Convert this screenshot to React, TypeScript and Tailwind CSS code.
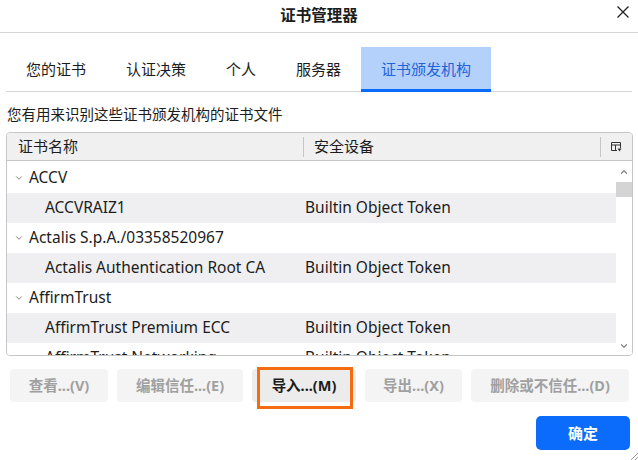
import { ChevronDown, ChevronUp } from 'lucide-react'

const rows = [
  { group: true, name: 'ACCV', device: '' },
  { group: false, name: 'ACCVRAIZ1', device: 'Builtin Object Token' },
  { group: true, name: 'Actalis S.p.A./03358520967', device: '' },
  { group: false, name: 'Actalis Authentication Root CA', device: 'Builtin Object Token' },
  { group: true, name: 'AffirmTrust', device: '' },
  { group: false, name: 'AffirmTrust Premium ECC', device: 'Builtin Object Token' },
  { group: false, name: 'AffirmTrust Networking', device: 'Builtin Object Token' },
]

const tabs = ['您的证书', '认证决策', '个人', '服务器', '证书颁发机构']

const buttons = [
  { label: '查看...(V)', w: 'w-[98px]', enabled: false },
  { label: '编辑信任...(E)', w: 'w-[126px]', enabled: false },
  { label: '导入...(M)', w: 'w-[104px]', enabled: true },
  { label: '导出...(X)', w: 'w-[97px]', enabled: false },
  { label: '删除或不信任...(D)', w: 'w-[158px]', enabled: false },
]

export default function App() {
  return (
    <div
      className="relative w-[638px] h-[460px] bg-white overflow-hidden text-[#1c1c1c]"
      style={{ fontFamily: '"Noto Sans", "Noto Sans CJK SC", sans-serif' }}
    >
      {/* Title bar */}
      <div className="relative h-[33px] border-b border-[#d6d6d6] flex items-center justify-center">
        <span className="text-[15.5px] font-bold leading-none">证书管理器</span>
        <svg className="absolute left-[617px] top-[6px]" width="12" height="12" viewBox="0 0 12 12">
          <path d="M0.5 0.5 L11.5 11.5 M11.5 0.5 L0.5 11.5" stroke="#222" strokeWidth="1.3" />
        </svg>
      </div>

      {/* Tabs */}
      <div className="px-[6px] pt-[14px]">
        <div className="flex h-[45px] border-b border-[#d6d6d6]">
          {tabs.map((t, i) => {
            const active = i === tabs.length - 1
            return (
              <div
                key={t}
                className={
                  active
                    ? 'relative px-[20px] flex items-center text-[15px] bg-[#b3d1fb] text-[#1f63d6]'
                    : 'relative px-[20px] flex items-center text-[15px]'
                }
              >
                {t}
                {active && <div className="absolute left-0 right-0 bottom-[-1px] h-[3px] bg-[#0b6cfb]" />}
              </div>
            )
          })}
        </div>
      </div>

      {/* Description */}
      <div className="px-[7px] mt-[12px] text-[14.5px] leading-[20px]">您有用来识别这些证书颁发机构的证书文件</div>

      {/* Tree table */}
      <div className="mx-[6px] mt-[8px] w-[627px] h-[224px] border border-[#c6c6c6] rounded-[4px] overflow-hidden flex flex-col">
        <div className="h-[28px] shrink-0 flex items-center bg-[#f0f0f0] border-b border-[#c6c6c6] text-[15px]">
          <div className="w-[296px] pl-[11px]">证书名称</div>
          <div className="w-px h-[20px] bg-[#c6c6c6]" />
          <div className="w-[296px] pl-[10px]">安全设备</div>
          <div className="w-px h-[20px] bg-[#c6c6c6]" />
          <div className="flex-1 flex items-center justify-center">
            <svg width="11" height="10" viewBox="0 0 11 10">
              <path d="M0.5 0.5 H9.5 V6 M0.5 0.5 V8.5 H6 M0.5 3 H9.5 M4.5 3 V8.5" stroke="#333" strokeWidth="1" fill="none" />
              <path d="M6.5 6.5 H10.5 L8.5 9.5 Z" fill="#333" />
            </svg>
          </div>
        </div>
        <div className="flex-1 flex min-h-0 pt-[2px]">
          <div className="flex-1 overflow-hidden">
            {rows.map((r, i) => (
              <div
                key={r.name}
                className={`h-[30px] flex items-center text-[15.5px] whitespace-nowrap ${i % 2 === 1 ? 'bg-[#efeff2]' : 'bg-white'}`}
              >
                {r.group ? (
                  <div className="w-[296px] flex items-center pl-[7px]">
                    <ChevronDown className="w-[10px] h-[10px] text-[#555] mr-[5px]" strokeWidth={1.75} />
                    <span>{r.name}</span>
                  </div>
                ) : (
                  <div className="w-[296px] pl-[38px]">{r.name}</div>
                )}
                <div className="pl-[2px]">{r.device}</div>
              </div>
            ))}
          </div>
          <div className="w-[16px] shrink-0 flex flex-col items-center bg-white">
            <ChevronUp className="w-[10px] h-[10px] text-[#8a8a8a] mt-[4px]" strokeWidth={3} />
            <div className="w-full h-[15px] bg-[#d4d4d4] mt-[5px]" />
            <div className="flex-1" />
            <ChevronDown className="w-[10px] h-[10px] text-[#8a8a8a] mb-[4px]" strokeWidth={3} />
          </div>
        </div>
      </div>

      {/* Action buttons */}
      <div className="flex gap-[9px] pl-[10px] mt-[13px]">
        {buttons.map((b) => (
          <div
            key={b.label}
            className={`${b.w} h-[33px] rounded-[4px] flex items-center justify-center text-[14.5px] font-bold ${
              b.enabled ? 'bg-[#ececec] text-[#1c1c1c]' : 'bg-[#f4f4f4] text-[#a0a0a0]'
            }`}
          >
            {b.label}
          </div>
        ))}
      </div>
      <div className="absolute left-[257px] top-[367px] w-[96px] h-[42px] border-[3px] border-[#f36c10]" />

      {/* OK */}
      <div className="flex justify-end pr-[8px] mt-[14px]">
        <div className="w-[94px] h-[34px] rounded-[5px] bg-[#0b6cfb] text-white text-[15px] font-bold flex items-center justify-center">
          确定
        </div>
      </div>

      {/* resize grip */}
      <svg className="absolute right-0 bottom-0" width="8" height="8" viewBox="0 0 8 8">
        <path d="M8 1 L1 8 M8 5 L5 8" stroke="#999" strokeWidth="1" />
      </svg>
    </div>
  )
}
